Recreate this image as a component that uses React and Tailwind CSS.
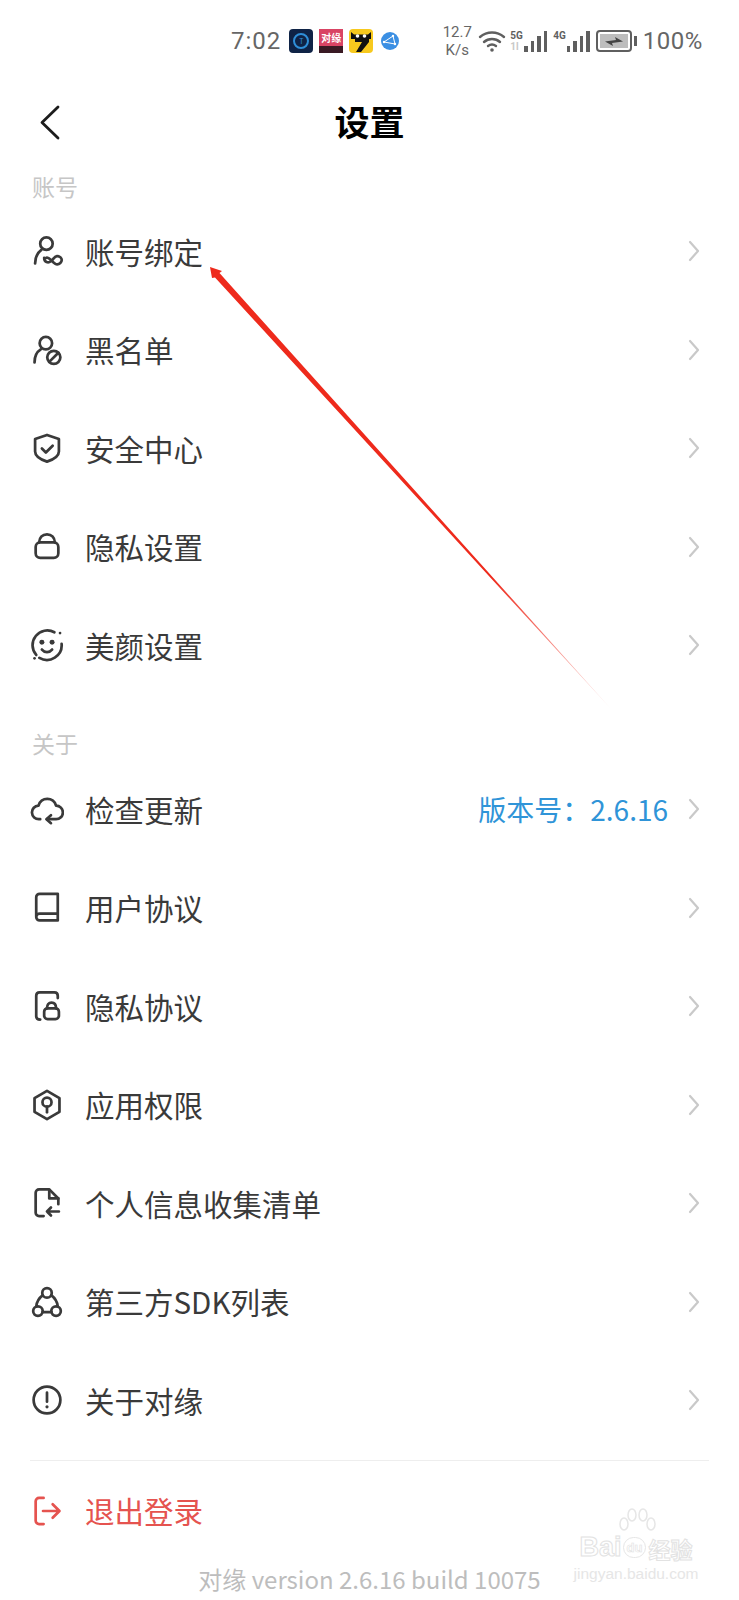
import React from "react";

const F = { fontFamily: '"Noto Sans CJK SC", "Noto Sans", sans-serif' };
const R = { fontFamily: "Roboto, sans-serif" };

function Ic({ children, color = "#3a3a3a" }) {
  return (
    <svg width="34" height="34" viewBox="0 0 30 30" fill="none" stroke={color} strokeWidth="2.4" strokeLinecap="round" strokeLinejoin="round" className="shrink-0 -m-[2px]">
      {children}
    </svg>
  );
}

const icons = {
  bind: (<Ic><circle cx="14.500" cy="8.500" r="5.500" /><path d="M4.500 26c0-5 1.500-9 5.500-12" /><path d="M12.500 21c0 4 3.500 5 6 3s3-4.500 5.500-4.500 4 1.800 4 3.500-2 3.800-4 3.800-3.500-1.800-5.500-3.800-3-2.500-4-2" /></Ic>),
  black: (<Ic><circle cx="14" cy="9" r="5.500" /><path d="M4 26c0-5 1.500-9 5.500-11.500" /><circle cx="21" cy="21.500" r="5.800" /><path d="M17 25.500l8-8" /></Ic>),
  shield: (<Ic><path d="M15 3.500l10.500 3.500v11c0 4.500-6 7.500-10.500 9-4.500-1.500-10.500-4.500-10.500-9V7z" /><path d="M10.500 15.500l3.500 3.500 6-6" /></Ic>),
  lock: (<Ic><rect x="5" y="11" width="20" height="13.500" rx="4" /><path d="M8 11c.3-4.500 3-7.200 7-7.200s6.700 2.700 7 7.200" /></Ic>),
  face: (<Ic><path d="M21.500 3.800A13 13 0 0 0 5.500 23.800" /><path d="M8.300 26.300A13 13 0 0 0 27.900 14" /><circle cx="26.500" cy="4.500" r="1.200" fill="#3a3a3a" stroke="none" /><circle cx="4" cy="26.800" r="1.200" fill="#3a3a3a" stroke="none" /><circle cx="10.500" cy="12.500" r="2.200" fill="#3a3a3a" stroke="none" /><circle cx="19.500" cy="12.500" r="2.200" fill="#3a3a3a" stroke="none" /><path d="M10.500 19c2.500 3 6.500 3 9 0" /></Ic>),
  cloud: (<Ic><path d="M9 24H8a6 6 0 0 1-.500-12 8 8 0 0 1 15.500 0 6 6 0 0 1 0 12h-8" /><path d="M18.500 20.500L14.500 24l4 3.500" /></Ic>),
  book: (<Ic><path d="M5.500 22.500V5.500a3 3 0 0 1 3-3h16v23.500h-16a3 3 0 0 1-3-3c0-1.500 1.500-3 3-3h16" /></Ic>),
  doclock: (<Ic><path d="M9 27c-2.500 0-3.500-1-3.500-3V6c0-2 1-3 3-3h13c2 0 3 1 3 3v2" /><rect x="12.500" y="17" width="13" height="9.500" rx="3" /><path d="M15 17c0-3 1.500-5 4-5s4 2 4 5" /></Ic>),
  hex: (<Ic><path d="M15 2.500l11 6.500v12l-11 6.500L4 21V9z" /><circle cx="15" cy="12.500" r="4" /><path d="M15 16.500v5" /></Ic>),
  file: (<Ic><path d="M12 26.500H8a3 3 0 0 1-3-3V6a3 3 0 0 1 3-3h9l8 8v5" /><path d="M17 3.500V11h8" /><path d="M25.500 22.500H15m3.500-3.500L15 22.500l3.500 3.500" /></Ic>),
  tri: (<Ic><circle cx="15" cy="7" r="4.200" /><circle cx="7" cy="23" r="4.200" /><circle cx="23" cy="23" r="4.200" /><path d="M11.300 9C8 11.500 6 14.500 5.500 19M18.700 9C22 11.500 24 14.500 24.500 19M11 24h8" /></Ic>),
  info: (<Ic><circle cx="15" cy="15" r="11.800" /><path d="M15 8.500v8" /><circle cx="15" cy="21" r="1.400" fill="#3a3a3a" stroke="none" /></Ic>),
  logout: (<Ic color="#e5534f"><path d="M12 26.500H8a3 3 0 0 1-3-3V6.500a3 3 0 0 1 3-3h4" /><path d="M11.500 15H25m-5-6l6 6-6 6" /></Ic>),
};

function Chevron() {
  return (
    <svg width="14" height="22" viewBox="0 0 14 22" fill="none" stroke="#c9c9c9" strokeWidth="2.2" strokeLinecap="round" strokeLinejoin="round" className="shrink-0">
      <path d="M3 2l8 9-8 9" />
    </svg>
  );
}

function Row({ icon, label, value }) {
  return (
    <div className="flex items-center h-[98.5px] pl-[32px] pr-[38px]">
      {icons[icon]}
      <span className="ml-[23px] text-[29.500px] leading-none text-[#3a3a3a]">{label}</span>
      <div className="flex-1" />
      {value && <span className="mr-[19px] text-[28px] leading-none text-[#2f94d8]">{value}</span>}
      <Chevron />
    </div>
  );
}

function Bars({ h = [6, 11, 16, 21] }) {
  return (
    <div className="flex items-end gap-[3px] h-[22px]">
      {h.map((x, i) => (
        <div key={i} className="w-[3.500px] bg-[#5f5f5f]" style={{ height: x }} />
      ))}
    </div>
  );
}

function StatusBar() {
  return (
    <div className="flex items-center h-[82px] pl-[231px] text-[#666666]">
      <span className="text-[24px] leading-none tracking-[1px]" style={R}>7:02</span>
      <div className="ml-[8px] w-[24px] h-[24px] rounded-[4px] bg-[#0f2346] flex items-center justify-center">
        <div className="w-[16px] h-[16px] rounded-full border-2 border-[#2f8fd8] text-[7px] leading-none text-[#2f8fd8] flex items-center justify-center">T</div>
      </div>
      <div className="ml-[6px] w-[24px] h-[24px] bg-[#d94464] flex flex-col items-center">
        <span className="text-[10px] leading-[17px] text-white font-bold whitespace-nowrap">对缘</span>
        <div className="w-full h-[7px] bg-[#3a1a24]" />
      </div>
      <div className="ml-[6px] w-[24px] h-[24px] rounded-[4px] bg-[#f7c91e] overflow-hidden">
        <svg width="24" height="24" viewBox="0 0 24 24">
          <path d="M2 3l3 2.500h14L22 3v7H2z" fill="#111" />
          <circle cx="8.500" cy="7" r="1.800" fill="#fff" />
          <circle cx="15.500" cy="7" r="1.800" fill="#fff" />
          <path d="M6 10h14v3L12 23H7l6-10H6z" fill="#111" />
        </svg>
      </div>
      <svg width="18" height="18" viewBox="0 0 18 18" className="ml-[8px]">
        <circle cx="9" cy="9" r="9" fill="#3b8fe3" />
        <path d="M3 10l9-6 2 8z" fill="none" stroke="#fff" strokeWidth="1" />
        <circle cx="12" cy="4" r="1.200" fill="#fff" />
        <circle cx="3" cy="10" r="1.200" fill="#fff" />
        <circle cx="14" cy="12" r="1.200" fill="#fff" />
      </svg>
      <div className="ml-[42px] w-[32px] flex flex-col items-center text-[15px] leading-[18px] text-[#666]" style={R}>
        <span>12.7</span>
        <span>K/s</span>
      </div>
      <svg width="28" height="24" viewBox="0 0 28 24" fill="none" stroke="#5f5f5f" strokeWidth="2.400" strokeLinecap="round" className="ml-[5px]">
        <path d="M2 8c7-6 17-6 24 0M6 13c4.500-4 11.500-4 16 0M10 17c2.500-2 5.500-2 8 0" />
        <circle cx="14" cy="21" r="1.800" fill="#5f5f5f" stroke="none" />
      </svg>
      <div className="ml-[4px] w-[13px] flex flex-col text-[10px] leading-[11px] font-bold text-[#5f5f5f]" style={R}>
        <span>5G</span>
        <span className="text-[#c8c8c8]">1l</span>
      </div>
      <div className="ml-[1px]"><Bars /></div>
      <span className="ml-[6px] mb-[10px] text-[10px] leading-none font-bold text-[#5f5f5f]" style={R}>4G</span>
      <div className="ml-[1px]"><Bars /></div>
      <div className="ml-[6px] w-[36px] h-[22px] rounded-[4px] border-2 border-[#5f5f5f] p-[2px]">
        <div className="w-full h-full bg-[#bdbdbd] flex items-center justify-center">
          <svg width="20" height="9" viewBox="0 0 20 9"><path d="M1 4.500L12 3 11 0l8 4.500L8 6l1 3z" fill="#444" /></svg>
        </div>
      </div>
      <div className="ml-[2px] w-[3px] h-[10px] bg-[#5f5f5f]" />
      <span className="ml-[6px] text-[24px] leading-none tracking-[0.5px]" style={R}>100%</span>
    </div>
  );
}

function Label({ children }) {
  return <div className="pl-[32px] text-[23px] leading-none text-[#c6c6c6]">{children}</div>;
}

export default function App() {
  return (
    <div className="relative w-[739px] h-[1600px] bg-white overflow-hidden" style={F}>
      <StatusBar />
      <div className="relative flex items-center justify-center h-[80px]">
        <svg width="24" height="38" viewBox="0 0 24 38" fill="none" stroke="#1c1c1c" strokeWidth="2.800" strokeLinecap="round" strokeLinejoin="round" className="absolute left-[38px] top-[22px]">
          <path d="M20 3L4 18.500 20 34" />
        </svg>
        <span className="text-[35px] leading-none font-bold text-black mb-[4px]">设置</span>
      </div>
      <div className="mt-[13px]"><Label>账号</Label></div>
      <div className="mt-[4px]">
        <Row icon="bind" label="账号绑定" />
        <Row icon="black" label="黑名单" />
        <Row icon="shield" label="安全中心" />
        <Row icon="lock" label="隐私设置" />
        <Row icon="face" label="美颜设置" />
      </div>
      <div className="mt-[37.500px]"><Label>关于</Label></div>
      <div className="mt-[5px]">
        <Row icon="cloud" label="检查更新" value="版本号：2.6.16" />
        <Row icon="book" label="用户协议" />
        <Row icon="doclock" label="隐私协议" />
        <Row icon="hex" label="应用权限" />
        <Row icon="file" label="个人信息收集清单" />
        <Row icon="tri" label="第三方SDK列表" />
        <Row icon="info" label="关于对缘" />
      </div>
      <div className="mx-[30px] h-[1px] bg-[#eeeeee] mt-[10px]" />
      <div className="flex items-center pl-[32px] h-[100px]">
        {icons.logout}
        <span className="ml-[23px] text-[29.500px] leading-none text-[#e5534f]">退出登录</span>
      </div>
      <div className="text-center text-[24px] leading-none text-[#bdbdbd] mt-[6px]">对缘 version 2.6.16 build 10075</div>

      <svg width="739" height="1600" viewBox="0 0 739 1600" className="absolute left-0 top-0 pointer-events-none">
        <defs>
          <linearGradient id="arrowFade" gradientUnits="userSpaceOnUse" x1="210" y1="267" x2="612" y2="710">
            <stop offset="0" stopColor="#ee2a1c" />
            <stop offset="0.7" stopColor="#ee2a1c" />
            <stop offset="1" stopColor="#ee2a1c" stopOpacity="0.1" />
          </linearGradient>
        </defs>
        <polygon points="210,267 222,271 219.500,273 612,710 215,277.500 212,278" fill="url(#arrowFade)" />
      </svg>

      <div className="absolute left-[568px] top-[1508px] w-[136px] flex flex-col items-center pointer-events-none" style={{ fontFamily: '"Liberation Sans", sans-serif' }}>
        <svg width="44" height="28" viewBox="0 0 44 28" fill="none" stroke="#e6e6e6" strokeWidth="1.500" className="ml-[2px]">
          <ellipse cx="9" cy="16" rx="4" ry="6" />
          <ellipse cx="17" cy="7" rx="4" ry="6" />
          <ellipse cx="28" cy="7" rx="4" ry="6" />
          <ellipse cx="36" cy="16" rx="4" ry="6" />
        </svg>
        <div className="flex items-center -mt-[2px] text-[27px] leading-none font-bold text-white [-webkit-text-stroke:1px_#e2e2e2]">
          <span>Bai</span>
          <span className="mx-[1px] px-[3px] py-[3px] rounded-full border border-[#e6e6e6] text-[13px] [-webkit-text-stroke:0.6px_#e2e2e2]">du</span>
          <span className="ml-[1px] text-[22px]" style={F}>经验</span>
        </div>
        <span className="mt-[5px] text-[15.500px] leading-none text-[#e6e6e6] whitespace-nowrap">jingyan.baidu.com</span>
      </div>
    </div>
  );
}
